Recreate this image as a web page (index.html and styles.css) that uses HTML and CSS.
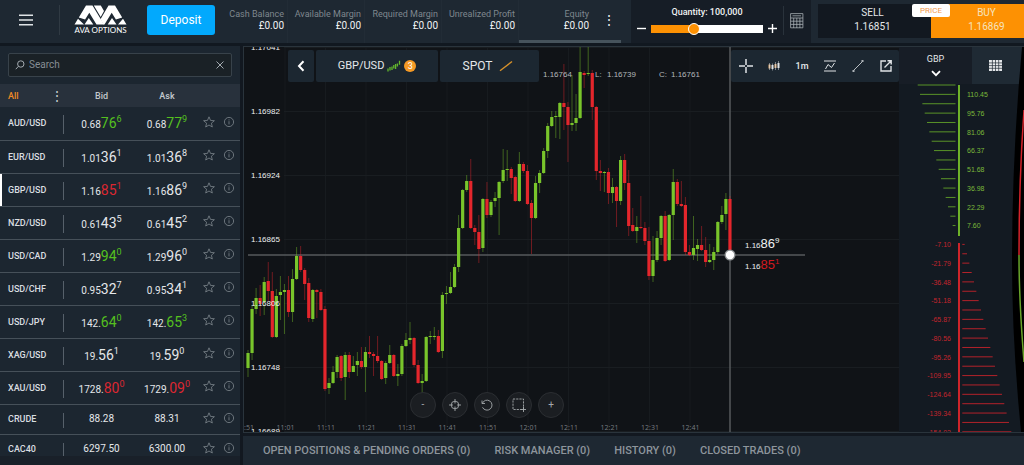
FILE: index.html
```html
<!DOCTYPE html>
<html lang="en">
<head>
<meta charset="utf-8">
<title>AVA Options</title>
<link rel="stylesheet" href="styles.css">
</head>
<body>
<svg class="sprite" aria-hidden="true">
  <symbol id="star" viewBox="0 0 12 12"><path d="M6 .8 7.5 4.4l3.9.3-3 2.5.9 3.8L6 9 2.7 11l.9-3.8-3-2.5 3.9-.3z"/></symbol>
  <symbol id="info" viewBox="0 0 12 12"><circle cx="6" cy="6" r="4.6"/><path d="M6 5.2v3.2M6 3.4v1"/></symbol>
</svg>

<header class="topbar">
  <button class="menu-btn" aria-label="Menu"><svg width="14" height="12" viewBox="0 0 14 12"><path d="M0 1.2h14M0 6h14M0 10.8h14"/></svg></button>
  <a class="logo" href="#" aria-label="AVA Options home">
    <svg width="53" height="20" viewBox="0 0 53 20">
      <path d="M.5 19.500 4 13.800l6 5.700zM4.800 12.500 12 .5h6.500L30 19.500h-7.500L15.300 7.800l-4.200 6.800z" fill="#fff"/>
      <path d="M10.500 19.500 14.800 13l4.500 6.500zM19.800.5h7l3.200 5.500-3.300 6zM34.500.5H41l7.200 12-6.300 2.100-4.200-6.800-7.200 11.700h-1l-3-5.200zM33.700 19.500 38 13l4.500 6.500zM49 13.800l3.500 5.700H44z" fill="#fff"/>
    </svg>
    <span>AVA OPTIONS</span>
  </a>
  <button class="deposit">Deposit</button>
  <dl class="stats">
    <div><dt>Cash Balance</dt><dd>£0.00</dd></div>
    <div><dt>Available Margin</dt><dd>£0.00</dd></div>
    <div><dt>Required Margin</dt><dd>£0.00</dd></div>
    <div><dt>Unrealized Profit</dt><dd>£0.00</dd></div>
    <div class="equity"><dt>Equity</dt><dd>£0.00</dd></div>
  </dl>
  <button class="kebab stats-more" aria-label="More account figures">⋮</button>
  <div class="quantity">
    <div class="quantity-field">
      <label for="qty">Quantity: 100,000</label>
      <div class="slider-row">
        <button aria-label="Decrease quantity"><svg width="9" height="9" viewBox="0 0 9 9"><path d="M0 4.500h9"/></svg></button>
        <input id="qty" type="range" min="0" max="100" value="37">
        <button aria-label="Increase quantity"><svg width="9" height="9" viewBox="0 0 9 9"><path d="M0 4.500h9M4.500 0v9"/></svg></button>
      </div>
    </div>
    <button class="calc" aria-label="Calculator"><svg width="14" height="16" viewBox="0 0 14 16"><path d="M.6.600h12.300v14.200H.6zM.6 5h12.300M2.500 2.800h8.500M.6 8.200h12.300M.6 11.400h12.300M3.700 5v10M6.800 5v10M9.900 5v10"/></svg></button>
  </div>
  <div class="trade">
    <button class="sell"><span>SELL</span><span>1.16851</span></button>
    <button class="buy"><span>BUY</span><span>1.16869</span></button>
    <span class="price-tag">PRICE</span>
  </div>
</header>

<main class="workspace">
  <aside class="watchlist">
    <div class="search">
      <svg width="10" height="10" viewBox="0 0 10 10"><circle cx="5.800" cy="4" r="3.200"/><path d="M3.400 6.300.8 9.200"/></svg>
      <input type="search" placeholder="Search" aria-label="Search instruments">
      <button aria-label="Clear search"><svg width="8" height="8" viewBox="0 0 8 8"><path d="M.5.500l7 7M7.500.500l-7 7"/></svg></button>
    </div>
    <table>
      <thead>
        <tr>
          <th class="name"><div><button class="filter">All</button><button class="kebab" aria-label="List options">⋮</button></div></th>
          <th class="bid">Bid</th><th class="ask">Ask</th>
          <th class="fav"></th><th class="about"></th>
        </tr>
      </thead>
      <tbody id="quotes"></tbody>
    </table>
  </aside>

  <section class="desk">
    <div class="panels">
      <div class="chart">
        <svg id="chart" class="plot" viewBox="244 47 655 385" preserveAspectRatio="xMinYMin slice" role="img" aria-label="GBP/USD one minute candles"></svg>
        <nav class="instrument">
          <button class="back" aria-label="Back"><svg width="8" height="12" viewBox="0 0 8 12"><path d="M6.500 1.200 2 6l4.500 4.800"/></svg></button>
          <button class="pair">GBP/USD
            <svg width="14" height="12" viewBox="0 0 14 12"><path d="M1 8.500v3M3 7v3.500M5 6.500V10M6.800 5v3.500M8.600 4v5M10.400 3.500V6.500M12.500.8v4" stroke="#64b92c" stroke-width="1.300"/></svg>
            <span class="count">3</span></button>
          <button class="spot">SPOT
            <svg width="14" height="12" viewBox="0 0 14 12"><path d="M1 10.800 13 1.500" stroke="#d7922b" stroke-width="1.400"/></svg></button>
        </nav>
        <nav class="tools">
          <button aria-label="Crosshair"><svg width="14" height="14" viewBox="0 0 14 14"><path d="M7 0v6M7 8v6M0 7h6M8 7h6" stroke-width="1.500"/></svg></button>
          <button aria-label="Chart type"><svg width="12" height="10" viewBox="0 0 12 10"><path d="M1.500 3.500v4M7.500 3v4" stroke="#e3b27d" stroke-width="2"/><path d="M4.500 4v4M10.500 2v5" stroke-width="2"/><path d="M1.500 2v7M4.500 2.500V9.500M7.500 1v8M10.500 0v9" stroke-width=".5"/></svg></button>
          <button>1m</button>
          <button aria-label="Indicators"><svg width="12" height="12" viewBox="0 0 12 12"><path d="M0 1h12M0 11h12M1.500 9 4 4.500l3.500 3 3-4.500"/></svg></button>
          <button aria-label="Draw line"><svg width="12" height="12" viewBox="0 0 12 12"><path d="M2 10 10 2" stroke-width=".8"/><path d="M.5 11h2M9.500 1h2" stroke-width="1.600"/></svg></button>
          <button aria-label="Open in new window"><svg width="12" height="12" viewBox="0 0 12 12"><path d="M6 1H1v10h10V6M7.500.800h3.700v3.700M11 1 4.500 7.500" stroke-width="1.400"/></svg></button>
        </nav>
        <div class="zoom">
          <button>-</button>
          <button aria-label="Centre"><svg width="12" height="12" viewBox="0 0 12 12"><circle cx="6" cy="6" r="3.800"/><path d="M6 0v4.500M6 7.500V12M0 6h4M8 6h4"/></svg></button>
          <button aria-label="Reset"><svg width="12" height="12" viewBox="0 0 12 12"><path d="M1 1.500V4.500H4M1.300 4.500A5 5 0 1 1 1.500 8.300"/></svg></button>
          <button aria-label="Select area"><svg width="14" height="14" viewBox="0 0 14 14"><path d="M1 1h10.500v10.500H1z" stroke-dasharray="2.200 1"/><path d="M11.500 9v5M9 11.500h5"/></svg></button>
          <button>+</button>
        </div>
      </div>
      <aside class="exposure">
        <div class="exposure-tabs">
          <button class="currency">GBP<svg width="10" height="7" viewBox="0 0 10 7"><path d="M1 1.200 5 5.200 9 1.200"/></svg></button>
          <button class="grid-view" aria-label="Table view"><svg width="13" height="11" viewBox="0 0 13 11"><path d="M0 0h13v11H0z" fill="#e8eaec"/><path d="M0 2.900h13M0 5.600h13M0 8.300h13M3.400 0v11M6.500 0v11M9.700 0v11" stroke="#1f2a34" stroke-width=".7"/></svg></button>
        </div>
        <svg id="scale" class="plot overlay" viewBox="899 47 125 385" preserveAspectRatio="xMinYMin slice" role="img" aria-label="Profit and loss scale"></svg>
      </aside>
    </div>
    <nav class="tabs">
      <a href="#">OPEN POSITIONS &amp; PENDING ORDERS (0)</a>
      <a href="#">RISK MANAGER (0)</a>
      <a href="#">HISTORY (0)</a>
      <a href="#">CLOSED TRADES (0)</a>
    </nav>
  </section>
</main>
<script src="app.js"></script>
</body>
</html>
```
FILE: styles.css
```css
* { box-sizing: border-box; }
body {
  margin: 0;
  height: 100vh;
  display: flex;
  flex-direction: column;
  overflow: hidden;
  background: #121820;
  color: #e4e7ea;
  font: 10px/12px Roboto, "Liberation Sans", sans-serif;
}
button {
  margin: 0;
  padding: 0;
  border: 0;
  background: none;
  color: inherit;
  font: inherit;
  cursor: pointer;
}
svg { display: block; fill: none; stroke: #dfe3e6; }
a { color: inherit; text-decoration: none; }
.sprite { position: absolute; width: 0; height: 0; }
.kebab { font-size: 14px; }

/* Top bar */
.topbar {
  flex: none;
  display: flex;
  height: 46px;
  background: #1e2832;
  border-bottom: 3px solid #111820;
}
.menu-btn {
  width: 60px;
  margin: 5px 0 8px;
  padding: 0 19px;
  border-right: 1px solid #303a43;
}
.menu-btn svg { stroke-width: 1.5; }
.logo {
  width: 53px;
  margin: 5px 20px 0 14px;
  color: #fff;
  font: 8px/11px Lato, sans-serif;
  white-space: nowrap;
}
.logo svg { stroke: none; }
.logo span { display: block; text-align: center; }
.deposit {
  width: 68px;
  height: 30px;
  margin-top: 5px;
  border-radius: 3px;
  background: #02a9fd;
  color: #fff;
  font-size: 12px;
}
.stats { display: flex; margin: 0 0 0 6px; text-align: right; white-space: nowrap; }
.stats div { padding: 8px 3px 0 0; border-right: 1px solid #222c36; min-width: 77px; }
.stats div:first-child { min-width: 67px; }
.stats dt { color: #7f878e; font-size: 9px; line-height: 12px; }
.stats dd { margin: 0; color: #f1f3f4; font-size: 10px; line-height: 12px; }
.stats .equity { border-right: 0; border-bottom: 3px solid #46535c; padding-right: 7px; }
.stats-more { width: 25px; border-bottom: 3px solid #46535c; }
.quantity {
  flex: none;
  display: flex;
  width: 180px;
  margin-left: 10px;
  padding: 6px 6px 0;
  background: #161d26;
}
.quantity-field { width: 140px; text-align: center; }
.quantity-field label { display: block; color: #f1f3f4; font-size: 9px; font-weight: 500; }
.slider-row { display: flex; align-items: center; justify-content: space-between; gap: 5px; height: 21px; }
.slider-row svg { stroke: #fff; stroke-width: 1.4; }
.slider-row input {
  appearance: none;
  flex: 1;
  min-width: 0;
  height: 8px;
  margin: 0;
  background: linear-gradient(to right, #fd9103 38%, #fff 38%);
}
.slider-row input::-webkit-slider-thumb {
  appearance: none;
  width: 12px;
  height: 12px;
  border: 1px solid #fff;
  border-radius: 50%;
  background: #fd9103;
}
.calc { margin: 0 0 8px 6px; padding-left: 6px; border-left: 1px solid #29323b; }
.calc svg { stroke: #a6adb3; stroke-width: .8; }
.trade {
  position: relative;
  flex: 1;
  display: grid;
  grid-template-columns: 113fr 93fr;
  padding: 4px 0 5px 7px;
}
.trade button { display: flex; flex-direction: column; align-items: center; gap: 2px; padding-top: 3px; }
.trade .sell { padding-right: 4px; background: #121820; }
.trade .buy { padding-left: 18px; background: #fd9103; color: #f6e3bf; }
.price-tag {
  position: absolute;
  top: 4px;
  left: 101px;
  width: 38px;
  height: 13px;
  border-radius: 2px;
  background: #fff;
  color: #f49b4e;
  font-size: 8px;
  line-height: 13px;
  text-align: center;
}

/* Watch list */
.workspace { flex: 1; min-height: 0; display: flex; gap: 3px; }
.watchlist { flex: none; width: 240px; overflow: hidden; background: #1c2630; border-bottom: 9px solid #192029; }
.search {
  display: flex;
  align-items: center;
  gap: 4px;
  height: 24px;
  margin: 7px 8px;
  padding: 0 7px 0 6px;
  border: 1px solid #38424a;
  border-radius: 2px;
  background: #1a2126;
}
.search svg { stroke: #a3aab0; }
.search input {
  flex: 1;
  min-width: 0;
  padding: 0;
  border: 0;
  outline: 0;
  background: none;
  color: #dfe3e6;
  font: inherit;
}
.search input::placeholder { color: #868e94; opacity: 1; }
table { width: 100%; table-layout: fixed; border-collapse: collapse; text-align: center; }
th { height: 23px; padding: 0; background: #28313c; color: #c3c8cd; font-weight: 500; font-size: 9px; }
th.name { width: 64px; }
th.bid { width: 75px; }
th.ask { width: 56px; }
th.fav { width: 28px; }
th.about { width: 17px; }
th.name div { display: flex; justify-content: space-between; align-items: center; padding: 0 0 0 8px; }
.filter { color: #f08a24; }
td { height: 33px; padding: 0; border-bottom: 1px solid #465059; white-space: nowrap; }
tr.plain td { height: 30px; }
tbody tr:last-child td { border-bottom: 0; }
td.name { position: relative; text-align: left; padding-left: 8px; font-size: 9px; font-weight: 500; color: #dadee1; }
td.name::after { content: ""; position: absolute; right: 0; top: 8px; bottom: 6px; width: 1px; background: #56606a; }
tr.selected { box-shadow: inset 2px 0 #fff; }
.pips { font-size: 14px; line-height: 12px; }
sup { font-size: 9px; line-height: 9px; vertical-align: 6px; }
.up { color: #55c01f; }
.down { color: #dd2731; }
td svg { width: 12px; height: 12px; margin: auto; stroke: #7d868d; stroke-width: .8; }
td.about { text-align: left; }

/* Chart */
.desk { flex: 1; min-width: 0; display: flex; flex-direction: column; }
.panels { flex: 1; min-height: 0; display: flex; border: 1px solid #2a343c; border-right: 0; }
.chart { position: relative; flex: 1; min-width: 0; background: #101317; }
.plot { width: 100%; height: 100%; stroke: none; }
.plot text { font-family: "Liberation Sans", sans-serif; font-size: 8px; }
.plot .time { font-family: "Open Sans", sans-serif; font-size: 7px; fill: #777c80; text-anchor: middle; }
.plot .rate { fill: #eef0f1; }
.plot .ohlc { fill: #b3b7ba; }
.plot .big { font-size: 13px; }
.plot .tick-label { font-size: 7px; }
.instrument { position: absolute; top: 3px; left: 44px; display: flex; gap: 2px; height: 32px; }
.instrument button {
  display: flex;
  align-items: center;
  justify-content: center;
  gap: 3px;
  border-radius: 2px;
  background: #1c2731;
  font-size: 11px;
}
.back { width: 26px; }
.back svg { stroke: #fff; stroke-width: 2; }
.pair { width: 122px; }
.instrument .spot { width: 99px; gap: 7px; padding-right: 3px; font-size: 12px; }
.count {
  width: 12px;
  height: 12px;
  border-radius: 50%;
  background: #f59a25;
  color: #fff;
  font-size: 9px;
}
.tools {
  position: absolute;
  top: 3px;
  right: 0;
  display: grid;
  grid-template-columns: repeat(6, 28px);
  height: 32px;
  border-radius: 2px;
  background: #1c2731;
}
.tools button { display: grid; place-items: center; padding-left: 2px; font-size: 9px; font-weight: 500; }
.zoom { position: absolute; left: 166px; bottom: 14px; display: flex; gap: 6px; }
.zoom button {
  display: grid;
  place-items: center;
  width: 26px;
  height: 26px;
  border: 1px solid #2b2e32;
  border-radius: 50%;
  background: #1b1e22;
  color: #a5a9ac;
}
.zoom svg { stroke: #a5a9ac; stroke-width: .9; }

/* Exposure scale */
.exposure { position: relative; flex: none; width: 125px; background: #131a22; }
.overlay { position: absolute; top: 0; left: 0; pointer-events: none; }
.exposure-tabs { display: flex; height: 37px; }
.currency { display: flex; flex-direction: column; align-items: center; gap: 5px; width: 73px; padding-top: 6px; background: #171d26; font-size: 9px; }
.currency svg { stroke: #fff; stroke-width: 1.8; }
.grid-view { display: grid; place-items: center; flex: 1; padding-right: 6px; background: #1f2a34; }

/* Bottom tabs */
.tabs {
  flex: none;
  display: flex;
  align-items: center;
  gap: 24px;
  height: 29px;
  margin-top: 3px;
  padding-left: 20px;
  background: #1e2832;
  color: #8d959c;
  font-size: 11px;
  font-weight: 500;
  white-space: nowrap;
}
```
FILE: app.js
```js
// Quotes: name, bid, ask as [lead, pips, fraction, direction]
const quotes = [
  ["AUD/USD", ["0.68", "76", "6", "up"], ["0.68", "77", "9", "up"]],
  ["EUR/USD", ["1.01", "36", "1", ""], ["1.01", "36", "8", ""]],
  ["GBP/USD", ["1.16", "85", "1", "down"], ["1.16", "86", "9", ""]],
  ["NZD/USD", ["0.61", "43", "5", ""], ["0.61", "45", "2", ""]],
  ["USD/CAD", ["1.29", "94", "0", "up"], ["1.29", "96", "0", ""]],
  ["USD/CHF", ["0.95", "32", "7", ""], ["0.95", "34", "1", ""]],
  ["USD/JPY", ["142.", "64", "0", "up"], ["142.", "65", "3", "up"]],
  ["XAG/USD", ["19.", "56", "1", ""], ["19.", "59", "0", ""]],
  ["XAU/USD", ["1728.", "80", "0", "down"], ["1729.", "09", "0", "down"]],
  ["CRUDE", ["88.28"], ["88.31"]],
  ["CAC40", ["6297.50"], ["6300.00"]]
];
const price = ([lead, pips, frac, dir]) =>
  pips ? `${lead}<span class="${dir}"><span class="pips">${pips}</span><sup>${frac}</sup></span>` : lead;
document.getElementById("quotes").innerHTML = quotes.map(([name, bid, ask]) => {
  const cls = name === "GBP/USD" ? "selected" : bid.length === 1 ? "plain" : "";
  return `<tr class="${cls}"><td class="name">${name}</td><td>${price(bid)}</td><td>${price(ask)}</td>
    <td><button aria-label="Favourite ${name}"><svg><use href="#star"/></svg></button></td>
    <td class="about"><button aria-label="About ${name}"><svg><use href="#info"/></svg></button></td></tr>`;
}).join("");

// Candles: direction, body top, body bottom, high, low
const candles = `G353,368,350,377 G309,353,305,360 G298,309,288,314 R298,304,285,316 G282,302,277,315 R281,291,262,302
R291,337,272,338 G296,337,289,338 G292,295,276,320 G290,292,284,334 R290,312,276,317 G279,312,269,322
G256,279,247,280 R256,270,246,272 R270,284,268,300 R283,318,278,322 G290,319,289,322 R290,292,289,318
R292,310,289,311 R309,389,306,391 G383,388,378,394 G372,383,366,384 G357,372,355,378 R356,378,355,381
G355,377,352,400 R355,372,352,378 G366,372,356,372 G361,365,352,376 R361,367,347,369 G352,367,347,392
R352,354,336,358 R354,356,352,376 R356,361,336,363 R361,379,360,380 G363,378,361,384 G355,363,345,364
R355,376,354,377 G374,376,364,386 G346,374,344,376 G340,346,333,347 G338,340,322,344 R338,365,337,367
R365,383,360,384 G381,383,374,395 G337,381,336,382 G336,337,331,344 G336,337,327,340 R336,352,330,353
G295,351,292,358 G293,294,286,304 G287,293,272,294 G267,287,264,288 G228,267,215,272 G190,228,189,229
G181,190,175,192 R181,228,159,229 R228,232,225,245 R232,249,215,263 G199,248,198,252 R199,215,182,218
G202,215,200,217 G198,201,192,207 G182,198,181,235 G170,181,149,183 G169,170,150,181 R169,178,167,194
R177,201,176,202 G164,201,152,202 R164,171,162,173 R171,204,165,205 R203,218,200,254 G183,218,176,219
G173,183,170,193 G151,173,148,174 G126,151,123,158 G117,126,111,127 G116,117,111,138 G103,117,102,139
R103,107,64,130 R107,125,102,162 G123,125,75,131 G118,123,94,131 G72,118,47,119 R73,75,71,88
G73,74,47,76 R73,107,70,120 R107,171,106,180 R171,173,160,191 G172,173,171,192 R172,193,168,204
G187,193,178,203 R187,201,186,227 G160,201,156,205 R160,183,154,190 R183,226,170,236 R225,231,208,232
G227,231,216,243 R227,228,196,229 R228,241,222,245 R241,276,227,280 G260,276,236,282 G238,260,231,262
G216,238,215,245 R216,261,211,262 G215,260,214,261 G182,215,169,240 R182,204,179,206 R204,206,181,207
R205,252,197,255 R252,255,245,256 G248,255,216,260 G245,249,239,261 R245,250,226,251 R250,262,237,267
G260,262,244,263 G252,260,247,270 G222,252,221,254 G215,222,206,224 G199,214,193,230 R199,255,196,256`.split(/\s+/);

const green = "#79c52b", red = "#e4262c";
let out = "";
for (let i = 0; i < 11; i++) out += `<path d="M${285 + i * 40.5} 47V432" stroke="#171b1f"/>`;
const rates = [["1.17041", 47], ["1.16982", 111], ["1.16924", 175], ["1.16865", 239], ["1.16806", 303], ["1.16748", 367], ["1.16689", 431]];
rates.forEach(([, y]) => { out += `<path d="M284 ${y + .5}H899" stroke="#191d21"/>`; });
["10:51", "11:01", "11:11", "11:21", "11:31", "11:41", "11:51", "12:01", "12:11", "12:21", "12:31", "12:41"].forEach((t, i) => {
  out += `<text class="time" x="${245 + i * 40.5}" y="430">${t}</text>`;
});
out += `<path d="M248 255H805M730 47V432" stroke="#55595c" stroke-width="1.5"/>`;
candles.forEach((c, i) => {
  const color = c[0] === "G" ? green : red;
  const [top, bottom, high, low] = c.slice(1).split(",").map(Number);
  const x = 248 + i * 4.05;
  out += `<path d="M${x} ${high}V${low}" stroke="${color}" stroke-opacity=".5" stroke-width=".9"/>` +
    `<rect x="${x - 1.6}" y="${top}" width="3.200" height="${Math.max(bottom - top, 1)}" fill="${color}"/>`;
});
rates.forEach(([t, y]) => { out += `<text class="rate" x="251" y="${y + 3}">${t}</text>`; });
[["1.16764", 543], ["L:", 595], ["1.16739", 607], ["C:", 659], ["1.16761", 671]].forEach(([t, x]) => {
  out += `<text class="ohlc" x="${x}" y="77">${t}</text>`;
});
out += `<circle cx="730" cy="255" r="5.500" fill="#8d9092"/><circle cx="730" cy="255" r="4.200" fill="#fff"/>
<text class="rate" x="745" y="248">1.16<tspan class="big">86</tspan><tspan dy="-5">9</tspan></text>
<text class="rate" x="745" y="269">1.16<tspan class="big" fill="#d3191f">85</tspan><tspan dy="-5" fill="#d3191f">1</tspan></text>`;
document.getElementById("chart").innerHTML = out;

// Profit and loss scale with the gauge edge on the right
let scale = `<path d="M1024 47H1022Q1012 155 1012 262Q1012 340 1021 432H1024Z" fill="#000"/>
<path d="M1024 110Q1019 180 1019 255" stroke="#d5232b" stroke-width="1.500"/>
<path d="M1019 255Q1019 300 1024 362" stroke="#69a62b" stroke-width="1.500"/>
<path d="M959 85V236" stroke="${green}" stroke-width="1.800"/><path d="M959 243V432" stroke="${red}" stroke-width="1.800"/>`;
for (let i = 0; i < 16; i++) scale += `<path d="M${917.7 + i * 2.33} ${85 + i * 9.37}H955.500" stroke="#5a9428"/>`;
for (let i = 0; i < 21; i++) scale += `<path d="M962.300 ${244.4 + i * 9.37}H${964.7 + i * 2.33}" stroke="#b3222a"/>`;
["110.45", "95.76", "81.06", "66.37", "51.68", "36.98", "22.29", "7.60"].forEach((t, i) => {
  scale += `<text class="tick-label" x="967" y="${97 + i * 18.75}" fill="#7ab93a">${t}</text>`;
});
["-7.10", "-21.79", "-36.48", "-51.18", "-65.87", "-80.56", "-95.26", "-109.95", "-124.64", "-139.34", "-154.03"].forEach((t, i) => {
  scale += `<text class="tick-label" x="951" y="${247 + i * 18.75}" text-anchor="end" fill="#c2252d">${t}</text>`;
});
document.getElementById("scale").innerHTML = scale;
```
